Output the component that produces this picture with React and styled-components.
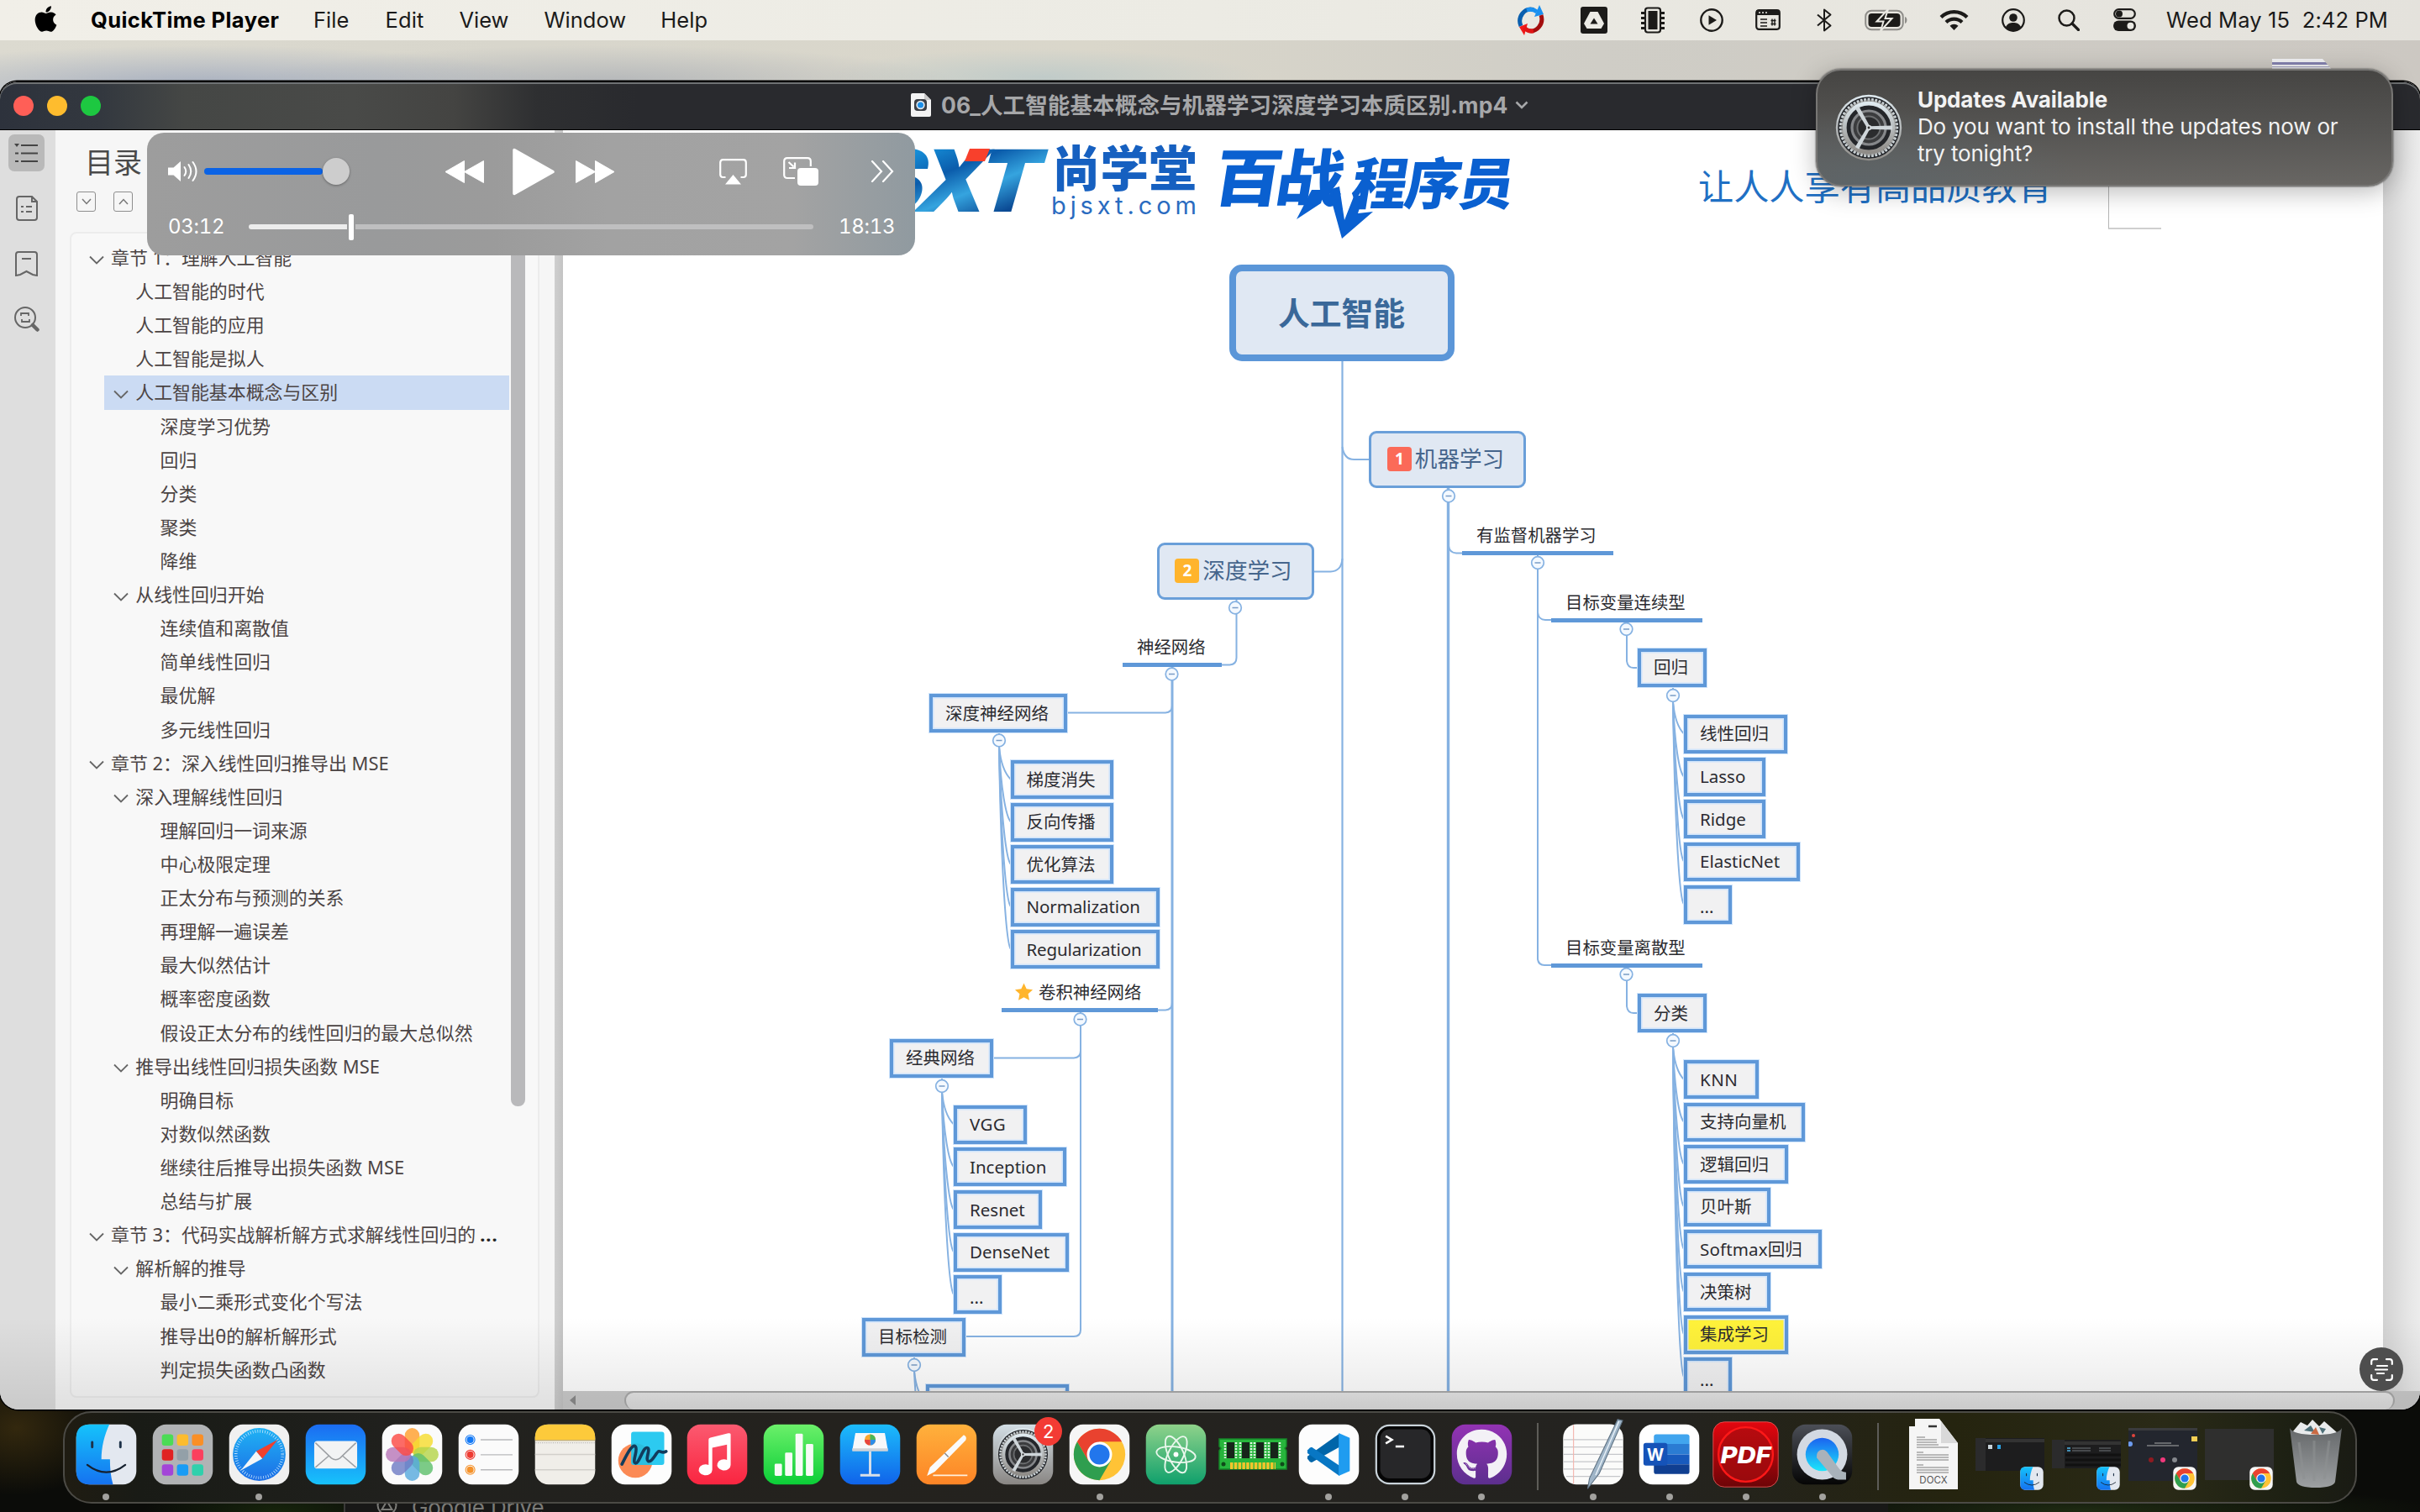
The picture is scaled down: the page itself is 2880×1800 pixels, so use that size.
import React from 'react';
import styled, { createGlobalStyle, css } from 'styled-components';
import { FaApple, FaGithub } from 'react-icons/fa';

const UI = `Inter, "Noto Sans CJK SC", sans-serif`;
const DOC = `"Noto Sans", "Noto Sans CJK SC", sans-serif`;

const Global = createGlobalStyle`
  * { box-sizing: border-box; }
  html, body { margin: 0; padding: 0; background: #0d0d0a; overflow: hidden; }
  svg { display: block; flex: none; }
`;

/* ---------- desktop ---------- */

const Desktop = styled.div`
  position: relative;
  width: 2880px;
  height: 1800px;
  overflow: hidden;
  font-family: ${UI};
  background:
    radial-gradient(ellipse 430px 50px at 240px 104px, rgba(155, 166, 188, 0.85), transparent),
    radial-gradient(ellipse 420px 44px at 720px 98px, rgba(165, 170, 178, 0.7), transparent),
    radial-gradient(ellipse 260px 34px at 1240px 92px, rgba(186, 200, 200, 0.8), transparent),
    linear-gradient(90deg, #dcdad0 0, #d8d6cc 600px, #dad7cb 1300px, #cfcdc6 1900px, #ccc8c2 2880px);
`;

const Ground = styled.div`
  position: absolute;
  left: 0;
  right: 0;
  bottom: 0;
  height: 170px;
  background:
    radial-gradient(ellipse 110px 80px at 20px 70px, #33280e, transparent),
    radial-gradient(ellipse 160px 40px at 330px 170px, #16240c, transparent),
    radial-gradient(ellipse 420px 30px at 2480px 168px, #1e2a12, transparent),
    #0b0c09;
`;

const DesktopFile = styled.div`
  position: absolute;
  left: 2704px;
  top: 70px;
  width: 72px;
  height: 40px;
  background: linear-gradient(#f2f2f4 0 4px, #8583b0 4px 7px, #f2f2f4 7px 9px, #a5a4c4 9px 10px, #f0f0f2 10px);
  clip-path: polygon(0 0, 60px 0, 72px 14px, 72px 100%, 0 100%);
`;

/* ---------- menu bar ---------- */

const MenuBar = styled.header`
  position: relative;
  height: 48px;
  padding: 0 38px 1px 41px;
  display: flex;
  align-items: center;
  background: linear-gradient(90deg, #f1efe8, #ecebe4 50%, #e4e2dc);
  color: #0a0a0a;
`;

const AppleMark = styled(FaApple)`
  width: 27px;
  height: 35px;
  margin-top: -3px;
  color: #000;
`;

const MenuItem = styled.span`
  font-size: 25.5px;
  line-height: 30px;
  white-space: nowrap;
  margin-left: ${(p) => p.$ml}px;
  letter-spacing: ${(p) => p.$ls || 0}px;
  font-weight: ${(p) => (p.$bold ? 700 : 400)};
  color: ${(p) => (p.$bold ? '#000' : '#1a1a1a')};
`;

const Status = styled.div`
  margin-left: auto;
  display: flex;
  align-items: center;
`;

const StatusIcon = styled.svg`
  margin-right: ${(p) => p.$mr}px;
`;

const Clock = styled.span`
  font-size: 25.5px;
  line-height: 30px;
  letter-spacing: 0.12px;
  white-space: pre;
  color: #1a1a1a;
`;

function MenuStatus() {
  const k = '#1c1b19';
  return (
    <Status>
      <StatusIcon $mr={42} width="34" height="36" viewBox="0 0 34 36">
        <path d="M5 25A13 14 0 0 1 20 5.500" fill="none" stroke="#0a5fae" strokeWidth="5" />
        <path d="M12 6A13 13 0 0 1 24 8" fill="none" stroke="#1a90f0" strokeWidth="5" />
        <path d="M21 14l11-3L27 0z" fill="#1a90f0" />
        <path d="M29 12A13 14 0 0 1 14 30.500" fill="none" stroke="#a30d0d" strokeWidth="5" />
        <path d="M13 22L3 26l6 10z" fill="#f01818" />
        <path d="M20 31A13 13 0 0 1 9 27" fill="none" stroke="#e01515" strokeWidth="5" />
      </StatusIcon>
      <StatusIcon $mr={40} width="32" height="32" viewBox="0 0 32 32">
        <rect width="32" height="32" rx="3" fill={k} />
        <path d="M11.500 6h9L28 20l-3.500 6h-17L4 20z" fill="#ecebe5" />
        <path d="M16 13.500l4.500 7h-9z" fill={k} />
      </StatusIcon>
      <StatusIcon $mr={42} width="28" height="32" viewBox="0 0 28 32">
        <rect x="5" y="1.500" width="18" height="29" rx="3" fill="none" stroke={k} strokeWidth="2.200" />
        <rect x="8.500" y="5" width="11" height="22" fill={k} />
        {[6, 12, 18, 24].map((y) => (
          <path key={y} d={`M0 ${y}h5v3h-5zM23 ${y}h5v3h-5z`} fill={k} />
        ))}
      </StatusIcon>
      <StatusIcon $mr={38} width="28" height="28" viewBox="0 0 28 28">
        <circle cx="14" cy="14" r="12.700" fill="none" stroke={k} strokeWidth="2.400" />
        <path d="M10.500 8.300v11.400l9.500-5.700z" fill={k} />
      </StatusIcon>
      <StatusIcon $mr={43} width="30" height="25" viewBox="0 0 30 25">
        <rect x="1.200" y="1.200" width="27.600" height="22.600" rx="3" fill="none" stroke={k} strokeWidth="2.200" />
        <path d="M1 1h28v6H1z" fill={k} />
        <path d="M4 4h2m2 0h2m2 0h2" stroke="#ecebe5" strokeWidth="1.600" />
        <path d="M6 12h8M6 16h8M6 20h8" stroke={k} strokeWidth="1.700" />
        <path d="M18.500 13.500h6M18.500 17.500h6M20 11.500v8M23 11.500v8" stroke={k} strokeWidth="1.400" />
      </StatusIcon>
      <StatusIcon $mr={39} width="18" height="28" viewBox="0 0 18 28">
        <path d="M1 7.500l15.500 13L9 26.500v-25l7.500 6L1 20.500" fill="none" stroke={k} strokeWidth="2" strokeLinejoin="round" />
      </StatusIcon>
      <StatusIcon $mr={37} width="52" height="26" viewBox="0 0 52 26">
        <rect x="1.200" y="1.700" width="44.500" height="22.600" rx="7" fill="none" stroke="#8e8d89" strokeWidth="2" />
        <rect x="4.500" y="5" width="38" height="16" rx="4" fill={k} />
        <path d="M48 9v8c3-1 3.500-7 0-8z" fill="#8e8d89" />
        <path d="M28 0L14.500 14.500h8L19 26l13.500-15h-8z" fill={k} stroke="#eae9e3" strokeWidth="2" />
      </StatusIcon>
      <StatusIcon $mr={39} width="35" height="25" viewBox="0 0 35 25">
        <path d="M2 9.500a22 22 0 0 1 31 0" fill="none" stroke={k} strokeWidth="4.200" />
        <path d="M8 15.500a13.500 13.500 0 0 1 19 0" fill="none" stroke={k} strokeWidth="4.200" />
        <path d="M17.500 25l-5-5.200a7.200 7.200 0 0 1 10 0z" fill={k} />
      </StatusIcon>
      <StatusIcon $mr={39} width="28" height="28" viewBox="0 0 28 28">
        <circle cx="14" cy="14" r="12.800" fill="none" stroke={k} strokeWidth="2.200" />
        <circle cx="14" cy="11" r="4.800" fill={k} />
        <path d="M4.800 22.500c2-4.500 5.500-5.500 9.200-5.500s7.200 1 9.200 5.500A13 13 0 0 1 14 27a13 13 0 0 1-9.200-4.500z" fill={k} />
      </StatusIcon>
      <StatusIcon $mr={40} width="26" height="26" viewBox="0 0 26 26">
        <circle cx="10.500" cy="10.500" r="9" fill="none" stroke={k} strokeWidth="2.500" />
        <path d="M17 17l7.500 7.500" stroke={k} strokeWidth="3.200" strokeLinecap="round" />
      </StatusIcon>
      <StatusIcon $mr={36} width="27" height="27" viewBox="0 0 27 27">
        <rect x="1.200" y="1.200" width="24.600" height="10.600" rx="5.300" fill="none" stroke={k} strokeWidth="2.200" />
        <circle cx="7" cy="6.500" r="4" fill={k} />
        <rect x="0" y="14.500" width="27" height="12.500" rx="6.200" fill={k} />
        <circle cx="20.500" cy="20.700" r="4" fill="#eae9e3" />
      </StatusIcon>
      <Clock>Wed May 15  2:42 PM</Clock>
    </Status>
  );
}

/* ---------- window ---------- */

const Window = styled.section`
  position: absolute;
  left: 0;
  top: 97px;
  width: 2880px;
  height: 1581px;
  border-radius: 20px 20px 22px 22px;
  overflow: hidden;
  background: #f7f7f7;
  box-shadow: 0 0 0 1.500px #000;
  display: flex;
  flex-direction: column;
`;

const TitleBar = styled.div`
  height: 58px;
  flex: none;
  display: flex;
  align-items: center;
  position: relative;
  border-top: 1px solid #000;
  border-bottom: 1.500px solid #000;
  border-radius: 20px 20px 0 0;
  box-shadow: inset 0 2px 0 #6f7274;
  background: linear-gradient(90deg, #2d323c 0, #33383f 120px, #454745 220px, #494a48 420px, #444442 540px, #2e2f31 640px, #292a2e 760px);
  padding-left: 16px;
`;

const Light = styled.span`
  width: 24px;
  height: 24px;
  border-radius: 50%;
  margin-right: 16px;
  background: ${(p) => p.$c};
`;

const DocTitle = styled.div`
  display: flex;
  align-items: center;
  margin-left: 948px;
  padding-bottom: 3px;
  color: #a6a7a9;
  font-size: 26.5px;
  font-weight: 700;
  white-space: nowrap;
  letter-spacing: 0.14px;

  span { margin: 0 8px 0 12px; line-height: 36px; }
`;

const Body = styled.div`
  flex: 1;
  display: flex;
  min-height: 0;
  position: relative;

  &::after {
    content: '';
    position: absolute;
    inset: auto 0 0 0;
    height: 110px;
    background: linear-gradient(transparent, rgba(0, 0, 0, 0.09));
    pointer-events: none;
  }
`;

const Rail = styled.nav`
  width: 66px;
  flex: none;
  background: #dedede;
  padding-top: 5px;
  display: flex;
  flex-direction: column;
  align-items: center;
  gap: 22px;
`;

const RailButton = styled.div`
  width: 43px;
  height: 44px;
  border-radius: 7px;
  background: ${(p) => (p.$active ? '#b9b9b9' : 'transparent')};
  display: flex;
  align-items: center;
  justify-content: center;
  margin-right: 3px;
`;

const Sidebar = styled.aside`
  width: 594px;
  flex: none;
  background: #f6f6f6;
  padding: 18px 18px 14px 17px;
  display: flex;
  flex-direction: column;
`;

const SideHead = styled.h2`
  margin: 0 0 0 18px;
  font: 400 34px/40px ${DOC};
  color: #4a4a4a;
`;

const SideTools = styled.div`
  display: flex;
  gap: 21px;
  margin: 15px 0 0 8px;
  height: 24px;
`;

const ToolBox = styled.span`
  width: 23px;
  height: 24px;
  border: 1.500px solid #8e8e8e;
  border-radius: 3px;
  display: flex;
  align-items: center;
  justify-content: center;
`;

const Outline = styled.div`
  margin-top: 24px;
  flex: 1;
  min-height: 0;
  border: 2px solid #ececec;
  border-radius: 8px;
  background: #f8f8f8;
  display: flex;
  padding-top: 9px;
`;

const Rows = styled.ul`
  flex: 1;
  margin: 0;
  padding: 0;
  list-style: none;
`;

const Row = styled.li`
  height: 40.120px;
  margin-left: ${(p) => 10 + (p.$level - 1) * 29.3}px;
  padding-left: 11px;
  display: flex;
  align-items: center;
  background: ${(p) => (p.$active ? '#cbdbf3' : 'transparent')};
  font: 400 21.900px/38px ${DOC};
  color: #4b4444;
  white-space: pre;

  b { color: #222; margin-left: 5px; letter-spacing: 1px; }
`;

const Twist = styled.span`
  width: 26px;
  flex: none;
  padding-top: 4px;
`;

const ScrollTrack = styled.div`
  width: 17px;
  margin: 0 15px 0 2px;
`;

const ScrollThumb = styled.div`
  height: 1030px;
  border-radius: 8px;
  background: #b9b9bb;
`;

const Splitter = styled.div`
  width: 10px;
  flex: none;
  background: linear-gradient(90deg, #cfcfcf, #c4c4c4);
`;

const Main = styled.div`
  flex: 1;
  display: flex;
  flex-direction: column;
  min-width: 0;
`;

const PageRow = styled.div`
  display: flex;
  height: 1501px;
`;

const VGutter = styled.div`
  flex: 1;
  background: linear-gradient(90deg, #d2d2d2, #e6e6e6 70%, #ececec);
`;

const HScroll = styled.div`
  flex: 1;
  display: flex;
  background: #cbcbcb;
  padding: 0 30px 0 8px;
  align-items: center;
`;

const HThumb = styled.div`
  flex: 1;
  align-self: stretch;
  margin-left: 57px;
  background: linear-gradient(#e6e6e6, #dedede);
  border: 2px solid #aaa;
  border-bottom: 0;
  border-radius: 12px;
`;

/* ---------- mind map page ---------- */

const OX = 670;
const OY = 155;

const Page = styled.div`
  position: relative;
  width: 2166px;
  flex: none;
  overflow: hidden;
  background: #fff;
`;

const Wires = styled.svg`
  position: absolute;
  inset: 0;
`;

const Free = styled.div`
  position: absolute;
  left: ${(p) => p.$x - OX}px;
  top: ${(p) => p.$y - OY}px;
  white-space: nowrap;
`;

const Topic = styled(Free)`
  width: ${(p) => p.$w}px;
  height: 46px;
  display: flex;
  align-items: center;
  padding: ${(p) => (p.$dots ? '6px' : '0')} 0 1px 15px;
  border: 4.500px solid #5f98d8;
  box-shadow: inset 0 0 0 1.500px #cfe4fb, 0 0 0 1px #cfe4fb;
  background: ${(p) => (p.$hot ? '#fff23a' : '#f1f1f2')};
  font: 400 20.500px/30px ${DOC};
  letter-spacing: ${(p) => p.$ls || 0}px;
  color: #2b2b30;
`;

const BigTopic = styled(Free)`
  width: ${(p) => p.$w}px;
  height: ${(p) => p.$h}px;
  display: flex;
  align-items: center;
  justify-content: center;
  gap: 4px;
  background: #e0e8f3;
  font-family: ${DOC};
  line-height: 1;
  ${(p) =>
    p.$root
      ? css`
          border: 8px solid #5b96d8;
          border-radius: 15px;
          font-size: 37.800px;
          font-weight: 700;
          color: #3a6899;
          padding-right: 1px;
        `
      : css`
          border: 3.500px solid #6a9fd9;
          border-radius: 9px;
          font-size: 26.600px;
          color: #45658c;
          padding-right: 4px;
        `}
`;

const Badge = styled.span`
  width: 29px;
  height: 29px;
  border-radius: 4px;
  background: ${(p) => p.$c};
  color: #fff;
  display: flex;
  align-items: center;
  justify-content: center;
  font-size: 19px;
  font-weight: 700;
`;

const Branch = styled(Free)`
  width: ${(p) => p.$w}px;
  height: 36px;
  border-bottom: 5px solid #5f98d8;
  padding-left: ${(p) => p.$pl || 17}px;
  display: flex;
  gap: 6px;
  font: 400 20.400px/25px ${DOC};
  color: #2b2b30;
`;

const Slogan = styled(Free)`
  font: 400 42.200px/50px ${DOC};
  color: #1f70c4;
`;

const Frame = styled(Free)`
  width: 63px;
  height: 90px;
  border-left: 1.500px solid #b5b5b5;
  border-bottom: 2px solid #cfcfcf;
`;

const Brand = styled(Free)`
  font-size: ${(p) => p.$size}px;
  line-height: 1;
  font-weight: ${(p) => p.$weight || 700};
  letter-spacing: ${(p) => p.$ls || 0}px;
  color: ${(p) => p.$c || '#0f62c4'};
  transform: ${(p) => p.$t || 'none'};
  transform-origin: 0 0;
  font-family: ${(p) => (p.$latin ? 'Inter, sans-serif' : DOC)};
`;

const Metal = styled.span`
  padding-right: 12px;
  background: linear-gradient(155deg, #1793dc 0 20%, #0b5cab 42%, #35a4df 60%, #0b4a94 80%);
  -webkit-background-clip: text;
  background-clip: text;
  color: transparent;
`;

const topics = [
  ['深度神经网络', 1106, 826, 163.5],
  ['梯度消失', 1202.5, 905, 122.5],
  ['反向传播', 1202.5, 955.5, 122.5],
  ['优化算法', 1202.5, 1006, 122.5],
  ['Normalization', 1202.5, 1056.5, 177.5, -0.1],
  ['Regularization', 1202.5, 1107, 177.5, -0.15],
  ['经典网络', 1059, 1236.5, 123],
  ['VGG', 1135, 1315.5, 86.5, 0.4],
  ['Inception', 1135, 1366, 133.500],
  ['Resnet', 1135, 1417, 105],
  ['DenseNet', 1135, 1467.5, 137],
  ['...', 1135, 1518, 57],
  ['目标检测', 1026, 1568.5, 123],
  ['', 1102, 1647.5, 170],
  ['回归', 1949, 771.5, 82],
  ['线性回归', 2004, 850.5, 123],
  ['Lasso', 2004, 901.5, 96.5],
  ['Ridge', 2004, 952, 96.5],
  ['ElasticNet', 2004, 1002.5, 137.5],
  ['...', 2004, 1053.5, 56.5],
  ['分类', 1949, 1183, 82],
  ['KNN', 2004, 1262, 88.5, 0.5],
  ['支持向量机', 2004, 1312.5, 144],
  ['逻辑回归', 2004, 1363, 123.5],
  ['贝叶斯', 2004, 1413.5, 102.5],
  ['Softmax回归', 2004, 1464, 164, 0.15],
  ['决策树', 2004, 1515, 102.5],
  ['集成学习', 2004, 1565.5, 123.500],
  ['...', 2004, 1616, 56.500],
];

const knots = [
  [1724, 590.5], [1470, 723.5], [1394.5, 802.5], [1189, 881.5], [1285.5, 1213.5],
  [1121, 1293], [1088, 1625], [1830, 670], [1935.5, 749], [1991, 828], [1935.5, 1160], [1991, 1239],
];

const fans = [
  [1189, 889, 1203, [928, 978.5, 1029, 1079.5, 1130]],
  [1121, 1300, 1135, [1338.5, 1389, 1440, 1490.5, 1541]],
  [1088, 1632, 1102, [1670, 1720]],
  [1991, 836, 2004, [873.5, 924.5, 975, 1025.5, 1076.5]],
  [1991, 1247, 2004, [1285, 1335.5, 1386, 1436.5, 1487, 1538, 1588.5, 1639]],
];

function MindMap() {
  return (
    <Page>
      <Brand $x={1048} $y={164} $size={102} $weight={900} $latin $ls={-7} $t="skewX(-16deg) scaleX(1.04)">
        <Metal>SXT</Metal>
      </Brand>
      <Brand $x={1252} $y={172} $size={57.5} $weight={900} $c="#1660c0">尚学堂</Brand>
      <Brand $x={1251} $y={230} $size={29} $weight={400} $latin $ls={4.9} $c="#2a6bc0">bjsxt.com</Brand>
      <Wires width="2166" height="1501" viewBox={`${OX} ${OY} 2166 1501`} fill="none" stroke="#86b2e2" strokeWidth="2">
        <path d="M1154 177h24l-6 15h-24z" fill="#f8402c" stroke="none" />
        <path d="M1561 226L1543 261 1572 242 1577 226zM1581 226L1597 284 1634 252 1616 254 1623 232 1611 234 1600 262 1594 222z" fill="#0a60d0" stroke="none" />
        <path d="M1597.500 430V1656" strokeWidth="2.200" />
        <path d="M1597.500 532q2 15 14 15h18M1597.500 665q-1 15-14 15.500h-20" />
        <path d="M1723.500 580V1656" strokeWidth="3.400" />
        <path d="M1724 650q1 8 9 8.500h8M1830 658v484q1 7 8 7h9M1830 729q1 9 9 9h8" />
        <path d="M1936 740v47q1 8 8 8h6M1936 1150v48q1 8 8 8h6M1991 817v10M1991 1228v8" />
        <path d="M1471.500 713v70q0 8-8 8.500h-10" />
        <path d="M1395 794V1656" strokeWidth="3" />
        <path d="M1395 840q0 8-8 8.500h-117M1395 1194q0 8-8 8.500h-10M1189 871v8M1121 1282v8M1088 1614v8" />
        <path d="M1286 1205v378q0 8-8 8h-130M1286 1251q0 8-8 8.500h-96" />
        {fans.map(([cx, sy, x, ends]) =>
          ends.map((y) => (
            <path key={`${cx}-${y}`} d={`M${cx} ${sy}C${cx + 2} ${sy + (y - sy) * 0.55} ${x - 6} ${y - 6} ${x} ${y}`} />
          ))
        )}
        {knots.map(([x, y]) => (
          <g key={`${x}${y}`}>
            <circle cx={x} cy={y} r="7.300" fill="#f4f9ff" strokeWidth="1.700" />
            <path d={`M${x - 3.500} ${y}h7`} stroke="#7a9cc6" strokeWidth="1.500" />
          </g>
        ))}
      </Wires>
      <Brand $x={1452} $y={174} $size={74} $weight={900} $ls={-6} $c="#0a60d0" $t="skewX(-9deg) scaleX(1.08)">百战</Brand>
      <Brand $x={1615} $y={184} $size={66} $weight={900} $ls={-2.5} $c="#0a60d0" $t="skewX(-9deg)">程序员</Brand>
      <Slogan $x={2021} $y={197}>让人人享有高品质教育</Slogan>
      <Frame $x={2509} $y={183} />

      <BigTopic $root $x={1463} $y={315} $w={268} $h={115}>人工智能</BigTopic>
      <BigTopic $x={1629} $y={512.500} $w={187} $h={68}>
        <Badge $c="#fb6a58">1</Badge>机器学习
      </BigTopic>
      <BigTopic $x={1376.500} $y={645.500} $w={187} $h={68}>
        <Badge $c="#ffb42c">2</Badge>深度学习
      </BigTopic>
      <Branch $x={1336} $y={758} $w={118}>神经网络</Branch>
      <Branch $x={1192} $y={1169} $w={186} $pl={15}>
        <svg width="23" height="24" viewBox="0 0 24 24"><path d="M12 1l3.300 7.200 7.700.9-5.700 5.300 1.500 7.800L12 18.400l-6.800 3.800 1.500-7.800L1 9.100l7.700-.9z" fill="#ffb52c" /></svg>
        卷积神经网络
      </Branch>
      <Branch $x={1740} $y={625} $w={179.500}>有监督机器学习</Branch>
      <Branch $x={1846} $y={704.500} $w={179.500}>目标变量连续型</Branch>
      <Branch $x={1846} $y={1115.500} $w={179.500}>目标变量离散型</Branch>
      {topics.map(([label, x, y, w, ls]) => (
        <Topic key={`${x}-${y}`} $x={x} $y={y} $w={w} $ls={ls} $dots={label === '...'} $hot={label === '集成学习'}>
          {label}
        </Topic>
      ))}
    </Page>
  );
}

/* ---------- outline data ---------- */

const outline = [
  [1, '章节 1：理解人工智能', 1], [2, '人工智能的时代'], [2, '人工智能的应用'], [2, '人工智能是拟人'],
  [2, '人工智能基本概念与区别', 1], [3, '深度学习优势'], [3, '回归'], [3, '分类'], [3, '聚类'], [3, '降维'],
  [2, '从线性回归开始', 1], [3, '连续值和离散值'], [3, '简单线性回归'], [3, '最优解'], [3, '多元线性回归'],
  [1, '章节 2：深入线性回归推导出 MSE', 1], [2, '深入理解线性回归', 1], [3, '理解回归一词来源'],
  [3, '中心极限定理'], [3, '正太分布与预测的关系'], [3, '再理解一遍误差'], [3, '最大似然估计'], [3, '概率密度函数'],
  [3, '假设正太分布的线性回归的最大总似然'], [2, '推导出线性回归损失函数 MSE', 1], [3, '明确目标'],
  [3, '对数似然函数'], [3, '继续往后推导出损失函数 MSE'], [3, '总结与扩展'],
  [1, '章节 3：代码实战解析解方式求解线性回归的', 1], [2, '解析解的推导', 1], [3, '最小二乘形式变化个写法'],
  [3, '推导出θ的解析解形式'], [3, '判定损失函数凸函数'],
];

function SidebarPanel() {
  return (
    <Sidebar>
      <SideHead>目录</SideHead>
      <SideTools>
        <ToolBox><svg width="12" height="8" viewBox="0 0 12 8"><path d="M1 1l5 5.500L11 1" fill="none" stroke="#777" strokeWidth="1.500" /></svg></ToolBox>
        <ToolBox><svg width="12" height="8" viewBox="0 0 12 8"><path d="M1 7l5-5.500L11 7" fill="none" stroke="#777" strokeWidth="1.500" /></svg></ToolBox>
      </SideTools>
      <Outline>
        <Rows>
          {outline.map(([level, text, open], i) => (
            <Row key={i} $level={level} $active={i === 4}>
              <Twist>
                {open && (
                  <svg width="18" height="11" viewBox="0 0 18 11"><path d="M1 1.500l8 8 8-8" fill="none" stroke="#666" strokeWidth="1.800" /></svg>
                )}
              </Twist>
              {text}
              {i === 29 && <b>...</b>}
            </Row>
          ))}
        </Rows>
        <ScrollTrack><ScrollThumb /></ScrollTrack>
      </Outline>
    </Sidebar>
  );
}

function RailPanel() {
  const s = { fill: 'none', stroke: '#666', strokeWidth: 2 };
  return (
    <Rail>
      <RailButton $active>
        <svg width="30" height="26" viewBox="0 0 30 26" stroke="#444" strokeWidth="2">
          <path d="M8 4h20M8 13.500h20M8 23h20M1 13.500h4M1 23h4" />
          <path d="M0 2h6L3 6z" fill="#444" stroke="none" />
        </svg>
      </RailButton>
      <RailButton>
        <svg width="26" height="30" viewBox="0 0 26 30" {...s}>
          <path d="M4 1h15l6 6v19q0 3-3 3H4q-3 0-3-3V4q0-3 3-3zM6 13h3m3 0h7M6 19h3m3 0h7M19 1v6h6" />
        </svg>
      </RailButton>
      <RailButton>
        <svg width="27" height="30" viewBox="0 0 27 30" {...s}>
          <path d="M4 1h19q3 0 3 3v25l-5-1-7.500-4L6 28l-5 1V4q0-3 3-3zM8 9h11" />
        </svg>
      </RailButton>
      <RailButton>
        <svg width="30" height="31" viewBox="0 0 30 31" {...s}>
          <circle cx="13" cy="13" r="12" />
          <path d="M22 22l5.500 5.500" strokeWidth="4.500" strokeLinecap="round" />
          <path d="M8 11V8h9v3M18 15v3H9v-3" strokeWidth="1.800" />
        </svg>
      </RailButton>
    </Rail>
  );
}

/* ---------- playback controls ---------- */

const Player = styled.div`
  position: absolute;
  left: 175px;
  top: 158px;
  width: 914px;
  height: 146px;
  border-radius: 20px;
  background: linear-gradient(90deg, #9d9d9d, #999a9b 30%, #9b9b9b 45%, #a2a2a2 60%, #a3a3a3 84%, #909aa0 100%);
  color: #fff;
`;

const Transport = styled.div`
  height: 92px;
  padding: 0 24px 0 25px;
  display: flex;
  align-items: center;
`;

const Volume = styled.div`
  margin-left: 8px;
  width: 142px;
  height: 8px;
  border-radius: 4px;
  background: #0b63e5;
`;

const Knob = styled.div`
  width: 32px;
  height: 32px;
  border-radius: 50%;
  background: #cdcdcd;
  box-shadow: 0 1px 3px rgba(0, 0, 0, 0.35);
`;

const Spacer = styled.div`
  width: ${(p) => p.$w}px;
  flex: none;
`;

const Timeline = styled.div`
  height: 40px;
  padding: 0 25px;
  display: flex;
  align-items: center;
  font-size: 24px;
  line-height: 30px;
  font-variant-numeric: tabular-nums;
  letter-spacing: -0.3px;
`;

const TimeText = styled.span`
  width: 66px;
  flex: none;
  text-align: ${(p) => (p.$end ? 'right' : 'left')};
  white-space: nowrap;
`;

const Played = styled.div`
  margin-left: 30px;
  width: 117px;
  height: 6px;
  border-radius: 3px 0 0 3px;
  background: #ececec;
`;

const PlayHead = styled.div`
  width: 6px;
  height: 31px;
  margin: 1px 2px 0;
  border-radius: 2px;
  background: #fff;
`;

const Remaining = styled.div`
  flex: 1;
  height: 6px;
  margin-right: 30px;
  border-radius: 0 3px 3px 0;
  background: #bfbfc0;
`;

function Controls() {
  return (
    <Player>
      <Transport>
        <svg width="35" height="26" viewBox="0 0 35 26">
          <path d="M0 8.500h6.500L15 1v24l-8.500-7.500H0z" fill="#fff" />
          <path d="M19.500 8q3.500 5 0 10M24.500 5q5.500 8 0 16M29.500 2q8 11 0 22" fill="none" stroke="#fff" strokeWidth="2" strokeLinecap="round" />
        </svg>
        <Volume /><Knob />
        <Spacer $w={114} />
        <svg width="46" height="27" viewBox="0 0 46 27"><path d="M0 13.500L22.500.500v26zM22.500 13.500L45.500.500v26z" fill="#fff" stroke="#fff" strokeLinejoin="round" /></svg>
        <Spacer $w={34} />
        <svg width="50" height="57" viewBox="0 0 50 57"><path d="M2 2.500v52L48 28.500z" fill="#fff" stroke="#fff" strokeWidth="3.500" strokeLinejoin="round" /></svg>
        <Spacer $w={25} />
        <svg width="46" height="27" viewBox="0 0 46 27"><path d="M46 13.500L23.500.500v26zM23.500 13.500L.500.500v26z" fill="#fff" stroke="#fff" strokeLinejoin="round" /></svg>
        <Spacer $w={125} />
        <svg width="33" height="31" viewBox="0 0 33 31">
          <path d="M7.500 22H4.500Q1.200 22 1.200 18.700V4.500Q1.200 1.200 4.500 1.200h24q3.300 0 3.300 3.300v14.200q0 3.300-3.300 3.300h-3" fill="none" stroke="#fff" strokeWidth="2.200" />
          <path d="M16.500 19l9.500 11.500H7z" fill="#fff" />
        </svg>
        <Spacer $w={43} />
        <svg width="43" height="34" viewBox="0 0 43 34">
          <path d="M14 25H5q-3.800 0-3.800-3.800V5Q1.200 1.200 5 1.200h24q3.800 0 3.800 3.800v6" fill="none" stroke="#fff" strokeWidth="2.200" />
          <path d="M6.500 6l6 5.500M14 6.500v6.500H7" fill="none" stroke="#fff" strokeWidth="2.200" />
          <rect x="17" y="13" width="25" height="21" rx="4" fill="#fff" />
        </svg>
        <Spacer $w={61} />
        <svg width="29" height="26" viewBox="0 0 29 26"><path d="M2 1l11 12L2 25M15 1l11 12-11 12" fill="none" stroke="#fff" strokeWidth="2.200" strokeLinecap="round" /></svg>
      </Transport>
      <Timeline>
        <TimeText>03:12</TimeText>
        <Played /><PlayHead /><Remaining />
        <TimeText $end>18:13</TimeText>
      </Timeline>
    </Player>
  );
}

/* ---------- notification ---------- */

const Notice = styled.div`
  position: absolute;
  left: 2161px;
  top: 82px;
  width: 687px;
  height: 140px;
  border-radius: 30px;
  border: 2px solid #777674;
  box-shadow: 0 6px 30px rgba(0, 0, 0, 0.28), 0 0 2px #333;
  background: radial-gradient(ellipse 260px 90px at 8% 100%, rgba(92, 100, 104, 0.9), transparent), linear-gradient(#464543, #555452 50%, #686663);
  display: flex;
  align-items: center;
  padding: 0 21px;
`;

const NoticeText = styled.div`
  margin: 0 0 2px 18px;
  color: #f2f2f2;
  font-size: 26px;
  line-height: 32px;
  letter-spacing: -0.18px;
  white-space: nowrap;

  strong { display: block; font-weight: 700; letter-spacing: -0.15px; }
`;

function Gear({ size, id }) {
  const teeth = Array.from({ length: 48 }, (_, i) => i * 7.5);
  return (
    <svg width={size} height={size} viewBox="-50 -50 100 100">
      <defs>
        <linearGradient id={id} x1="0" y1="0" x2="0" y2="1"><stop offset="0" stopColor="#dfeaf0" /><stop offset="1" stopColor="#8f8c88" /></linearGradient>
      </defs>
      <circle r="49" fill={`url(#${id})`} />
      <circle r="46" fill="#24262a" />
      {teeth.map((a) => <path key={a} d="M-1.600-44h3.200L2.600-38h-5.200z" fill={`url(#${id})`} transform={`rotate(${a})`} />)}
      <circle r="36" fill="none" stroke={`url(#${id})`} strokeWidth="6" />
      <circle r="25" fill="#3b3c3e" stroke="#85878a" strokeWidth="4" />
      <circle r="17" fill="#2b2c2e" stroke="#6c6e70" strokeWidth="2.500" />
      {[90, 210, 330].map((a) => <path key={a} d="M-2.300 0L-3.200-35h6.400L2.300 0z" fill="#cfd6da" transform={`rotate(${a})`} />)}
      <circle r="4" fill="#d8dde0" />
      <circle r="1.800" fill="#333" />
    </svg>
  );
}

/* ---------- dock ---------- */

const BehindDock = styled.div`
  position: absolute;
  left: 409px;
  bottom: 0;
  width: 1838px;
  height: 22px;
  background: #181817;
  border-left: 2px solid #3a3a38;
  color: #7b7b77;
  padding-left: 36px;
  display: flex;
  gap: 16px;
  font-size: 26px;
  line-height: 34px;
  letter-spacing: -0.2px;
  white-space: nowrap;
`;

const Dock = styled.footer`
  position: absolute;
  left: 75px;
  top: 1680px;
  width: 2730px;
  height: 110px;
  border-radius: 34px;
  border: 2px solid #4b4a45;
  background: linear-gradient(90deg, #1f1c12, #191b16 90px, #21211e 420px, #24221e 900px, #242320 1900px, #25240f 2250px, #2a2a17 2500px, #1d2013 2650px, #1a1b14);
  display: flex;
  padding-left: 4px;
`;

const Slot = styled.div`
  width: 90.950px;
  flex: none;
  display: flex;
  flex-direction: column;
  align-items: center;
  justify-content: flex-end;
  position: relative;
`;

const IconBox = styled.div`
  height: 84px;
  display: flex;
  align-items: center;
  justify-content: center;
  position: relative;
`;

const Dot = styled.i`
  width: 8px;
  height: 8px;
  margin: 5px 0 2px;
  border-radius: 50%;
  background: ${(p) => (p.$on ? '#a2a19e' : 'transparent')};
`;

const Divider = styled.div`
  width: 41.500px;
  flex: none;
  display: flex;
  justify-content: center;
  padding: 12px 0 14px;

  &::before { content: ''; width: 2px; background: #5d5c58; }
`;

const Count = styled.span`
  position: absolute;
  right: -10px;
  top: -2px;
  width: 33px;
  height: 34px;
  border-radius: 50%;
  background: #f33b34;
  color: #fff;
  font-size: 22px;
  line-height: 34px;
  text-align: center;
`;

const Thumb = styled.div`
  width: 82px;
  height: ${(p) => p.$h}px;
  background: ${(p) => p.$bg};
`;

const Mini = styled.div`
  position: absolute;
  right: 1px;
  bottom: -1px;
`;

function Tile({ fill, children, size = 73 }) {
  return (
    <svg width={size} height={size} viewBox="0 0 100 100">
      <rect x="1" y="1" width="98" height="98" rx="22" fill={fill} />
      {children}
    </svg>
  );
}

function Grad({ id, a, b }) {
  return <linearGradient id={id} x1="0" y1="0" x2="0" y2="1"><stop offset="0" stopColor={a} /><stop offset="1" stopColor={b} /></linearGradient>;
}

function Finder({ size }) {
  return (
    <Tile fill="#e3e8f0" size={size}>
      <path d="M23 1h32C47 18 42 38 42 58h14c0 14 1 28 5 41H23Q1 99 1 77V23Q1 1 23 1z" fill="url(#gFinder)" />
      <path d="M27 30v8M73 30v8" stroke="#1d3148" strokeWidth="4" strokeLinecap="round" />
      <path d="M19 67q31 24 62 0" fill="none" stroke="#15202e" strokeWidth="3" strokeLinecap="round" />
    </Tile>
  );
}

function Chrome({ size }) {
  return (
    <Tile fill="#f6f6f6" size={size}>
      <circle cx="50" cy="50" r="42" fill="#ffc336" />
      <path d="M13.600 29A42 42 0 0 1 86.400 29H50L31.800 60.500z" fill="#e9422f" />
      <path d="M13.600 29A42 42 0 0 0 50 92L68.200 60.500 50 50 31.800 60.500z" fill="#2f9e4f" />
      <circle cx="50" cy="50" r="20.500" fill="#fff" />
      <circle cx="50" cy="50" r="16.500" fill="#2276ec" />
    </Tile>
  );
}

const petals = ['#ff9f2d', '#f5dc30', '#b5d44a', '#5fbf6c', '#58a9dd', '#6f7cc4', '#b878b8', '#fb4a44'];
const pads = ['#4bdc55', '#fcbc2e', '#fa8f26', '#e02222', '#93a0a8', '#fb3f5e', '#a345d8', '#1a9cf5', '#2fd0ac'];

const glyphs = {
  finder: <Finder />,
  launchpad: (
    <Tile fill="#b1b3b5">
      {pads.map((c, i) => <rect key={c} x={16 + (i % 3) * 24.5} y={17 + Math.floor(i / 3) * 24.5} width="18.500" height="18.500" rx="4.500" fill={c} />)}
    </Tile>
  ),
  safari: (
    <Tile fill="#f0f0f0">
      <circle cx="50" cy="50" r="43" fill="url(#gSafari)" />
      <circle cx="50" cy="50" r="38" fill="none" stroke="#cfeafd" strokeWidth="5" strokeDasharray="1 3" />
      <path d="M80 26L55 57 45 45z" fill="#f0402e" />
      <path d="M20 76L45 45l10 12z" fill="#f4f6f8" />
    </Tile>
  ),
  mail: (
    <Tile fill="url(#gMail)">
      <rect x="15" y="28" width="70" height="45" rx="5" fill="#f2f3f4" />
      <path d="M17 31l26 25q7 5 14 0l26-25M17 71l22-19M83 71L61 52" fill="none" stroke="#9c9fa3" strokeWidth="2" />
    </Tile>
  ),
  photos: (
    <Tile fill="#fbfbfb">
      {petals.map((c, i) => <rect key={c} x="38" y="7" width="24" height="41" rx="12" fill={c} opacity="0.82" transform={`rotate(${i * 45} 50 50)`} />)}
    </Tile>
  ),
  reminders: (
    <Tile fill="#fbfbfb">
      {['#1379f6', '#ee3b32', '#f5922a'].map((c, i) => (
        <g key={c}>
          <circle cx="20" cy={26 + i * 24.5} r="5.500" fill={c} /><circle cx="20" cy={26 + i * 24.5} r="7.500" fill="none" stroke={c} strokeWidth="1.500" />
          <path d={`M37 ${26 + i * 24.5}h52`} stroke="#b9babc" strokeWidth="2" />
        </g>
      ))}
    </Tile>
  ),
  notes: (
    <Tile fill="#f0eee9">
      <path d="M23 1h54q22 0 22 22v3H1v-3Q1 1 23 1z" fill="#fdca3b" />
      <path d="M1 27h98" stroke="#b89a4a" strokeWidth="1.500" />
      <path d="M2 31h96" stroke="#b9b7b2" strokeWidth="2" strokeDasharray="1.500 2" />
      <path d="M1 50h98M1 75h98" stroke="#d2d0cb" strokeWidth="2" />
    </Tile>
  ),
  freeform: (
    <Tile fill="#fdfdfd">
      <circle cx="40" cy="60" r="28" fill="#fb8a55" />
      <rect x="33" y="13" width="54" height="54" rx="4" fill="#15c4ee" opacity="0.9" />
      <path d="M18 66c8-16 17-34 22-29s-6 25 0 27 12-26 19-25-4 19 2 22 13-15 17-16 5 4 12 0" fill="none" stroke="#123c5c" strokeWidth="5" strokeLinecap="round" />
    </Tile>
  ),
  music: (
    <Tile fill="url(#gMusic)">
      <path d="M72 17v50a11 9 0 1 1-6-8V34L42 39v36a11 9 0 1 1-6-8V26q0-3 3-3.500l29-7q4-.500 4 1.500z" fill="#fff" />
    </Tile>
  ),
  numbers: (
    <Tile fill="url(#gNumbers)">
      {[[19, 65], [36, 47], [53, 16], [70, 33]].map(([x, y]) => <rect key={x} x={x} y={y} width="12" height={85 - y} rx="2" fill="#f7fbf7" />)}
    </Tile>
  ),
  keynote: (
    <Tile fill="url(#gKeynote)">
      <path d="M26 15h48l5 28H21z" fill="#f7f8fa" /><path d="M21 40h58v5H21z" fill="#cfd3d8" />
      <path d="M48 45h4v38h-4zM34 82h32v4H34z" fill="#d8dfe8" />
      <circle cx="50" cy="26" r="9" fill="#fba52f" /><path d="M50 26V17a9 9 0 0 1 9 9z" fill="#4bb857" /><path d="M50 26h9a9 9 0 0 1-9 9z" fill="#2b8de8" /><path d="M50 26v9a9 9 0 0 1-9-9z" fill="#e8453c" />
    </Tile>
  ),
  pages: (
    <Tile fill="url(#gPages)">
      <path d="M78 18q6 3 3 9L31 78l-13 7 5-14z" fill="#fafafa" /><path d="M47 48l6 6" stroke="#888" strokeWidth="2" />
      <path d="M28 84h56" stroke="#fff0dc" strokeWidth="2.500" />
    </Tile>
  ),
  settings: (
    <svg width="73" height="73" viewBox="0 0 100 100">
      <rect x="1" y="1" width="98" height="98" rx="22" fill="url(#gSettings)" />
      <foreignObject x="6" y="6" width="88" height="88"><Gear size={88} id="gearDock" /></foreignObject>
    </svg>
  ),
  chrome: <Chrome />,
  atom: (
    <Tile fill="url(#gAtom)">
      <g fill="none" stroke="#e9f7ec" strokeWidth="2.600">
        <ellipse cx="50" cy="50" rx="32" ry="12.500" transform="rotate(8 50 50)" />
        <ellipse cx="50" cy="50" rx="32" ry="12.500" transform="rotate(66 50 50)" />
        <ellipse cx="50" cy="50" rx="32" ry="12.500" transform="rotate(116 50 50)" />
      </g>
      <circle cx="50" cy="50" r="4" fill="#fff" />
    </Tile>
  ),
  ram: (
    <svg width="82" height="38" viewBox="0 0 82 38">
      <path d="M1 1h80v9l-2 2 2 3v22H1V15l2-3-2-2z" fill="#27b53c" stroke="#168428" strokeWidth="1.500" />
      {[10, 28, 45, 62].map((x) => (
        <g key={x}>
          <rect x={x} y="5" width="9" height="19" fill="#17251a" />
          <path d={`M${x - 2} 5v19M${x + 11} 5v19`} stroke="#e5f5e6" strokeWidth="2.500" strokeDasharray="2 1.500" />
        </g>
      ))}
      <path d="M14 33h54" stroke="#f4c42c" strokeWidth="8" strokeDasharray="3.500 1.300" />
      <circle cx="6" cy="31" r="2.500" fill="#0f4a19" /><circle cx="76" cy="31" r="2.500" fill="#0f4a19" />
    </svg>
  ),
  vscode: (
    <Tile fill="#fdfdfd">
      <path d="M67 16v22L22 63l-3-1-4-5v-4z" fill="#0065a9" />
      <path d="M15 43l4-4 3-1 45 30v17L15 48z" fill="#0877c4" />
      <path d="M66 15l18 8v54l-18 8z" fill="#1f9cf0" />
    </Tile>
  ),
  terminal: (
    <svg width="73" height="73" viewBox="0 0 100 100">
      <rect x="1" y="1" width="98" height="98" rx="23" fill="#c9d3da" />
      <rect x="4" y="4" width="92" height="92" rx="20" fill="#050505" />
      <rect x="9" y="9" width="82" height="80" rx="15" fill="#272729" />
      <path d="M18 20l10 6-10 6" fill="none" stroke="#fff" strokeWidth="3.500" /><path d="M34 37h14" stroke="#fff" strokeWidth="3.500" />
    </svg>
  ),
  github: (
    <Tile fill="url(#gGithub)">
      <FaGithub x="8" y="8" size={84} color="#f3f1f6" />
    </Tile>
  ),
  textedit: (
    <svg width="76" height="84" viewBox="0 0 104 115">
      <rect x="3" y="9" width="98" height="98" rx="22" fill="#fbfbfa" />
      <path d="M3 34h98M3 46h98M3 58h98M3 70h98M3 82h98M8 94h88" stroke="#c6c7ca" strokeWidth="1.800" />
      <path d="M20 10v96" stroke="#f3b3ac" strokeWidth="1.500" />
      <path d="M92 1l8 2-38 86-19 25 3-17z" fill="#9fb5c8" stroke="#5e7182" strokeWidth="1.500" />
      <path d="M94 4L56 92" stroke="#e8f1f8" strokeWidth="2" />
    </svg>
  ),
  word: (
    <Tile fill="#fff">
      <path d="M29 17h50q4 0 4 4v12H25V21q0-4 4-4z" fill="#41a5ee" /><path d="M25 33h58v17H25z" fill="#2b7cd3" /><path d="M25 50h58v16H25z" fill="#185abd" />
      <path d="M25 66h58v12q0 4-4 4H29q-4 0-4-4z" fill="#103f91" />
      <rect x="8" y="31" width="39" height="37" rx="4" fill="#1553b8" />
      <text x="27.500" y="60" fontFamily="Inter, sans-serif" fontWeight="700" fontSize="27" fill="#fff" textAnchor="middle">W</text>
    </Tile>
  ),
  pdf: (
    <svg width="79" height="79" viewBox="0 0 100 100">
      <rect x="1" y="1" width="98" height="98" rx="17" fill="url(#gPdf)" stroke="#f25d5d" strokeWidth="1" />
      <circle cx="50" cy="50" r="42" fill="#a80d10" opacity="0.700" stroke="none" /><circle cx="50" cy="50" r="41" fill="none" stroke="#ff1818" strokeWidth="3" />
      <text x="50" y="63" fontFamily="Inter, sans-serif" fontWeight="800" fontStyle="italic" fontSize="34" fill="#fff" textAnchor="middle" textLength="76" lengthAdjust="spacingAndGlyphs">PDF</text>
    </svg>
  ),
  quicktime: (
    <Tile fill="url(#gQt)">
      <circle cx="50" cy="50" r="41" fill="#d3d9e2" />
      <circle cx="50" cy="50" r="27" fill="url(#gQtIn)" />
      <path d="M41 55q-1-12 10-13 4 0 7 4l18 25q5 8 13 8v12H76q-6 0-10-6z" fill="#a9b2ba" />
    </Tile>
  ),
  docx: (
    <svg width="60" height="84" viewBox="0 0 60 84">
      <path d="M8 0h29l22 29v55H1V9h7z" fill="#f5f5f5" /><path d="M39 3v26h20z" fill="#d9d9d9" />
      <path d="M24 9h10" stroke="#333" strokeWidth="2.500" />
      <path d="M10 22h10M10 25h24M10 28h24M10 31h26M10 34h38M10 40h8M10 43h38M10 46h38M10 49h38M10 55h8M10 58h38M10 61h38M10 64h38" stroke="#a5a5a5" strokeWidth="1.400" />
      <text x="30" y="77" fontFamily="Inter, sans-serif" fontSize="11.500" fill="#555" textAnchor="middle">DOCX</text>
    </svg>
  ),
  trash: (
    <svg width="64" height="84" viewBox="0 0 64 84">
      <path d="M4 16L14 4l8 4 6-7 8 8 6-6 16 14-6 6H6z" fill="#e9ebec" />
      <path d="M18 14l8-6 5 8zM36 10l8 2-4 6z" fill="#4d6f78" /><path d="M26 18l6-8 4 9z" fill="#c96a43" />
      <path d="M1 11l8 64q2 7 23 7t23-7l8-64q-4 8-31 8T1 11z" fill="url(#gTrash)" />
      <path d="M12 28l6 44M30 26v48M48 26l-6 46" stroke="#8e9192" strokeWidth="3" opacity="0.600" />
    </svg>
  ),
};

const first = ['finder*', 'launchpad', 'safari*', 'mail', 'photos', 'reminders', 'notes', 'freeform', 'music', 'numbers', 'keynote', 'pages', 'settings', 'chrome*', 'atom', 'ram', 'vscode*', 'terminal*', 'github*'];
const second = ['textedit*', 'word*', 'pdf*', 'quicktime*'];

function DockItem({ name }) {
  const key = name.replace('*', '');
  return (
    <Slot>
      <IconBox>
        {glyphs[key]}
        {key === 'settings' && <Count>2</Count>}
      </IconBox>
      <Dot $on={name.endsWith('*')} />
    </Slot>
  );
}

function WindowThumb({ h, kind, children }) {
  return (
    <Slot>
      <IconBox>
        <Thumb $h={h} $bg={kind === 'blank' ? '#2f2f2e' : kind === 'web' ? '#23262e' : '#1d1d1e'}>
          <svg width="82" height={h} viewBox={`0 0 82 ${h}`}>
            {kind === 'finder' && <><path d={`M0 0h12v${h}H0z`} fill="#2b2b2c" /><path d="M12 3h70" stroke="#333" strokeWidth="4" /><path d="M15 8h5v5h-5z" fill="#c8d4da" /><path d="M26 8h4v5h-4z" fill="#2aa4e8" /></>}
            {kind === 'list' && <><path d={`M0 0h15v${h}H0z`} fill="#2b2b2c" /><path d="M15 4h67" stroke="#333" strokeWidth="4" /><path d="M18 10h4M18 13h4" stroke="#4fb4e8" strokeWidth="1.500" /><path d="M24 10h22M24 13h22M56 10h14M56 13h14" stroke="#70767a" strokeWidth="1" /><path d="M16 18h66M16 24h66M16 30h66" stroke="#111" strokeWidth="3" /></>}
            {kind === 'web' && <><path d="M0 0h82v3H0z" fill="#3a3b3e" /><circle cx="6" cy="9" r="2" fill="#e0443c" /><circle cx="2" cy="19" r="3" fill="#6d9bf0" /><rect x="75" y="10" width="7" height="6" fill="#f5cf55" /><path d="M31 18h20M22 21h38" stroke="#aaa" strokeWidth="1.200" /><circle cx="27" cy="38" r="3" fill="#8e1a20" /><circle cx="41" cy="38" r="3" fill="#f0387c" /><circle cx="55" cy="38" r="3" fill="#85888e" /></>}
          </svg>
        </Thumb>
        <Mini>{children}</Mini>
      </IconBox>
      <Dot />
    </Slot>
  );
}

const DefsSvg = styled.svg`
  position: absolute;
`;

function Defs() {
  return (
    <DefsSvg width="0" height="0">
      <defs>
        <Grad id="gFinder" a="#15c3fb" b="#1572f0" /><Grad id="gSafari" a="#1fb2f4" b="#1c6ee6" /><Grad id="gMail" a="#1b6cf2" b="#17c2fb" />
        <Grad id="gMusic" a="#fb5a70" b="#fa2540" /><Grad id="gNumbers" a="#6bf06a" b="#0bce37" /><Grad id="gKeynote" a="#1cbcfb" b="#1063ea" />
        <Grad id="gPages" a="#ffb13c" b="#fd8426" /><Grad id="gSettings" a="#d3dee5" b="#898683" /><Grad id="gAtom" a="#8fd28a" b="#0fa06c" />
        <Grad id="gGithub" a="#9333b4" b="#5c2f8e" /><Grad id="gPdf" a="#e3070f" b="#6d0407" /><Grad id="gQt" a="#4c4f57" b="#050505" />
        <Grad id="gQtIn" a="#1b63f0" b="#1be6fb" /><Grad id="gTrash" a="#65686a" b="#9da0a2" />
      </defs>
    </DefsSvg>
  );
}

const LiveText = styled.div`
  position: absolute;
  left: 2808px;
  top: 1604px;
  width: 52px;
  height: 52px;
  border-radius: 50%;
  background: #4e4e4e;
  display: flex;
  align-items: center;
  justify-content: center;
`;

export default function App() {
  return (
    <Desktop>
      <Global />
      <Defs />
      <Ground />
      <MenuBar>
        <AppleMark />
        <MenuItem $bold $ml={40} $ls={0.42}>QuickTime Player</MenuItem>
        <MenuItem $ml={40.5} $ls={0.1}>File</MenuItem>
        <MenuItem $ml={43} $ls={0.1}>Edit</MenuItem>
        <MenuItem $ml={42} $ls={0}>View</MenuItem>
        <MenuItem $ml={42} $ls={0}>Window</MenuItem>
        <MenuItem $ml={41} $ls={0.1}>Help</MenuItem>
        <MenuStatus />
      </MenuBar>
      <DesktopFile />

      <Window>
        <TitleBar>
          <Light $c="#ff5f57" /><Light $c="#febc2e" /><Light $c="#1dc841" />
          <DocTitle>
            <svg width="24" height="28" viewBox="0 0 24 28">
              <path d="M2 0h14l8 8v18q0 2-2 2H2q-2 0-2-2V2q0-2 2-2z" fill="#f3f3f3" /><path d="M16 0v8h8z" fill="#c9c9c9" />
              <rect x="4" y="7" width="15" height="14" rx="4" fill="#3c3f45" /><circle cx="11.500" cy="14" r="5.200" fill="#e0e8f0" /><circle cx="11.500" cy="14" r="3.500" fill="#1c8fe8" />
            </svg>
            <span>06_人工智能基本概念与机器学习深度学习本质区别.mp4</span>
            <svg width="16" height="10" viewBox="0 0 16 10"><path d="M1.500 1.500L8 8l6.500-6.500" fill="none" stroke="#a6a7a9" strokeWidth="2.600" /></svg>
          </DocTitle>
        </TitleBar>
        <Body>
          <RailPanel />
          <SidebarPanel />
          <Splitter />
          <Main>
            <PageRow>
              <MindMap />
              <VGutter />
            </PageRow>
            <HScroll>
              <svg width="8" height="12" viewBox="0 0 8 12"><path d="M7 0v12L0 6z" fill="#8b8b8b" /></svg>
              <HThumb />
            </HScroll>
          </Main>
        </Body>
      </Window>

      <Controls />

      <Notice>
        <Gear size={80} id="gearNotice" />
        <NoticeText>
          <strong>Updates Available</strong>
          Do you want to install the updates now or<br />try tonight?
        </NoticeText>
      </Notice>

      <LiveText>
        <svg width="27" height="27" viewBox="0 0 27 27" fill="none" stroke="#fff" strokeWidth="2.200" strokeLinecap="round">
          <path d="M1.200 7V4q0-2.800 2.800-2.800h4M19 1.200h4q2.800 0 2.800 2.800v3M25.800 20v3q0 2.800-2.800 2.800h-4M8 25.800H4Q1.200 25.800 1.200 23v-3M8 9h12M6 13.500h14M8 18h8" />
        </svg>
      </LiveText>

      <BehindDock>
        <svg width="27" height="24" viewBox="0 0 27 24"><circle cx="13.500" cy="14" r="11" fill="none" stroke="#7b7b77" strokeWidth="2" /><path d="M13.500 9l6 10h-12z" fill="none" stroke="#7b7b77" strokeWidth="2" /></svg>
        Google Drive
      </BehindDock>
      <Dock>
        {first.map((n) => <DockItem key={n} name={n} />)}
        <Divider />
        {second.map((n) => <DockItem key={n} name={n} />)}
        <Divider />
        <DockItem name="docx" />
        <WindowThumb h={39} kind="finder"><Finder size={28} /></WindowThumb>
        <WindowThumb h={34} kind="list"><Finder size={28} /></WindowThumb>
        <WindowThumb h={63} kind="web"><Chrome size={28} /></WindowThumb>
        <WindowThumb h={61} kind="blank"><Chrome size={28} /></WindowThumb>
        <DockItem name="trash" />
      </Dock>
    </Desktop>
  );
}
